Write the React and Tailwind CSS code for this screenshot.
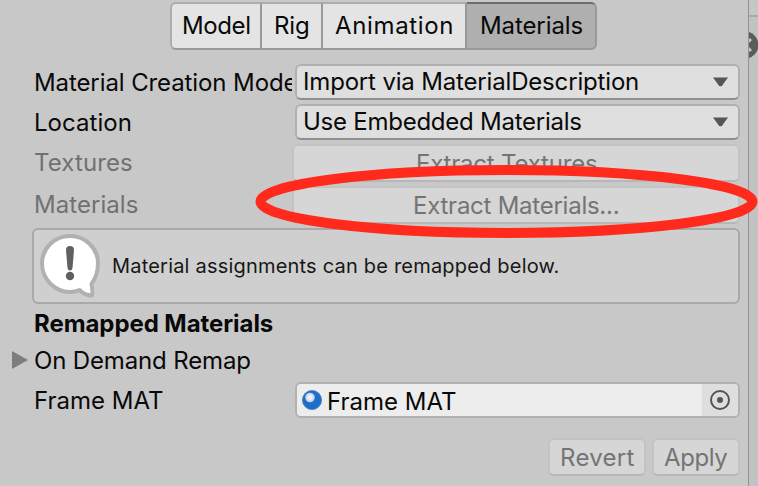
import React from "react";

const tabs = [
  { name: "Model", cls: "w-[92px] pl-[10px] border-r-2 tracking-[-0.4px]" },
  { name: "Rig", cls: "w-[61px] pl-[12px] border-r-2 tracking-[-0.1px]" },
  { name: "Animation", cls: "w-[144px] pl-[12px] border-r-2 tracking-[0.65px]" },
  { name: "Materials", cls: "w-[130px] pl-[13px] tracking-[-0.1px] bg-[#afafaf] border-t-[#6c6c6c] border-r-2 rounded-r-[6px]" },
];

function Label({ children, className = "" }) {
  return (
    <div className={`shrink-0 overflow-hidden whitespace-nowrap pl-[34px] leading-9 ${className}`}>
      {children}
    </div>
  );
}

function Dropdown({ children, className }) {
  return (
    <div className="flex h-9 w-[445px] items-center justify-between rounded-[6px] border-2 border-[#b0b0b0] border-b-[#8f8f8f] bg-[#dfdfdf] pl-[6px] pr-[10px]">
      <span className={`whitespace-nowrap ${className}`}>{children}</span>
      <svg width="15" height="10" viewBox="0 0 15 10" fill="#575750">
        <path d="M0 0.5H15L9 8.7Q7.5 10 6 8.7Z" />
      </svg>
    </div>
  );
}

function Button({ children, className }) {
  return (
    <div className={`flex h-[38px] items-center whitespace-nowrap rounded-[6px] border-2 border-[#c3c3c3] border-b-[#b7b7b7] bg-[#d6d6d6] pt-[2px] text-[#747474] ${className}`}>
      {children}
    </div>
  );
}

export default function App() {
  return (
    <div className="relative flex h-[486px] w-[758px] overflow-hidden bg-[#c8c8c8] text-[24px] leading-none text-[#090909] [font-family:Inter,'Liberation_Sans',sans-serif]">
      <main className="flex w-[748px] shrink-0 flex-col">
        <nav className="ml-[170px] mt-[2px] flex h-12">
          {tabs.map((t, i) => (
            <div
              key={t.name}
              className={`flex items-center whitespace-nowrap border-y-2 border-[#999999] ${
                i < 3 ? "border-t-[#adadad] bg-[#e4e4e4]" : ""
              } ${i === 0 ? "rounded-l-[6px] border-l-2 border-l-[#adadad]" : ""} ${t.cls}`}
            >
              {t.name}
            </div>
          ))}
        </nav>

        <div className="mt-[14px] flex h-9">
          <Label className="mr-[3px] w-[292px] pt-px tracking-[-0.1px]">Material Creation Mode</Label>
          <Dropdown className="tracking-[-0.17px]">Import via MaterialDescription</Dropdown>
        </div>
        <div className="mt-1 flex h-9">
          <Label className="w-[295px] pt-px tracking-[0.05px]">Location</Label>
          <Dropdown className="tracking-[-0.25px]">Use Embedded Materials</Dropdown>
        </div>
        <div className="mt-1 flex h-[38px]">
          <Label className="w-[292px] pt-px tracking-[0.1px] text-[#717171]">Textures</Label>
          <Button className="w-[448px] pl-[122px] tracking-[-0.2px]">Extract Textures...</Button>
        </div>
        <div className="mt-1 flex h-[38px]">
          <Label className="w-[292px] pt-px tracking-[0.05px] text-[#717171]">Materials</Label>
          <Button className="w-[448px] pl-[119px] tracking-[-0.25px]">Extract Materials...</Button>
        </div>

        <section className="ml-8 mt-1 flex h-[76px] w-[708px] items-center rounded-[6px] border-2 border-[#a9a9a9] bg-[#cfcfcf] text-[20px] text-[#171717]">
          <svg className="ml-[5px] mr-[11px] shrink-0" width="62" height="68" viewBox="0 0 62 68">
            <path
              d="M31 4C15.500 4 3 16.200 3 31.500S15.500 60 31 60Q36 60 40.500 58Q46 63.500 53 63.500Q54 62 52.500 52Q59 43 59 31.500C59 16.200 46.500 4 31 4Z"
              fill="#fff"
              stroke="#b1b1b1"
              strokeWidth="4"
              strokeLinejoin="round"
            />
            <path d="M27 18Q27 14 31 14T35 18L33.500 36Q33 38.500 31 38.500T28.500 36Z" fill="#606060" />
            <circle cx="31" cy="44" r="4.200" fill="#606060" />
          </svg>
          <span className="whitespace-nowrap tracking-[0.2px]">Material assignments can be remapped below.</span>
        </section>

        <h2 className="mt-[1px] h-[37px] whitespace-nowrap pl-[34px] font-bold leading-[37px] tracking-[-0.07px]">Remapped Materials</h2>
        <div className="flex h-9 items-center">
          <svg className="ml-3 mr-[6px]" width="16" height="18" viewBox="0 0 16 18">
            <path d="M0 0L16 9L0 18Z" fill="#7d7d7d" />
          </svg>
          <span className="pt-[2px] tracking-[-0.15px]">On Demand Remap</span>
        </div>
        <div className="mt-1 flex h-9">
          <Label className="w-[295px] pt-px">Frame MAT</Label>
          <div className="flex h-9 w-[445px] items-center overflow-hidden rounded-[6px] border-2 border-[#b1b1b1] bg-[#ededed] pl-[5px]">
            <svg width="20" height="20" viewBox="0 0 20 20">
              <defs>
                <radialGradient id="shine">
                  <stop offset="0.4" stopColor="#e8eef2" />
                  <stop offset="1" stopColor="#b9cfe0" />
                </radialGradient>
              </defs>
              <circle cx="10" cy="10" r="9.600" fill="#1c6fcb" stroke="#4a7fae" strokeWidth="0.800" />
              <circle cx="8" cy="7.500" r="4.800" fill="url(#shine)" />
            </svg>
            <span className="ml-[5px] flex-1 pt-[3px]">Frame MAT</span>
            <div className="flex h-full w-[36px] items-center justify-center bg-[#dedede]">
              <svg width="20" height="20" viewBox="0 0 20 20">
                <circle cx="10" cy="10" r="9" fill="none" stroke="#555" strokeWidth="2" />
                <circle cx="10" cy="10" r="3" fill="#555" />
              </svg>
            </div>
          </div>
        </div>
        <div className="ml-[548px] mt-5 flex gap-[6px]">
          <Button className="w-[98px] pl-[10px] tracking-[0.3px]">Revert</Button>
          <Button className="w-[88px] pl-[10px] tracking-[-0.4px]">Apply</Button>
        </div>
      </main>

      <aside className="w-[10px] overflow-hidden border-l border-[#929292] bg-[#c2c2c2]">
        <div className="h-[17px] border-b-2 border-[#aaaaaa] bg-[#c6c6c6]" />
        <svg className="mt-[14px]" width="9" height="28" viewBox="0 0 9 28">
          <circle cx="-4" cy="14" r="13.500" fill="#5c5c5c" />
          <path d="M2 8L-4 14L2 20" fill="none" stroke="#c4c4c4" strokeWidth="3" />
        </svg>
      </aside>

      <svg className="pointer-events-none absolute left-0 top-0" width="758" height="486" viewBox="0 0 758 486">
        <ellipse cx="506.500" cy="201.500" rx="246" ry="31.500" fill="none" stroke="#ff2a1c" strokeWidth="10" />
      </svg>
    </div>
  );
}
